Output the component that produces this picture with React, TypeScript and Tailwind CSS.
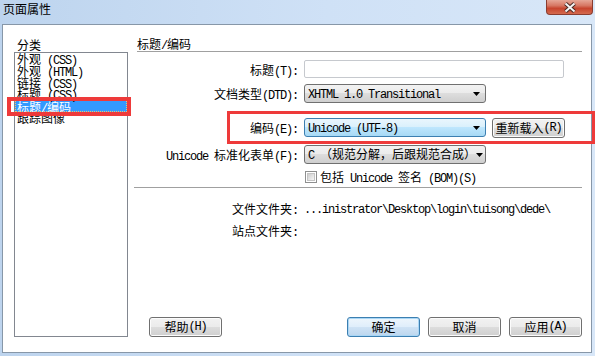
import type { ReactNode } from "react";

const CJK = /[\u2E80-\u9FFF\uFF00-\uFFEF\u3000-\u303F]/;
const CJK_RUNS = /([\u2E80-\u9FFF\uFF00-\uFFEF\u3000-\u303F]+)/;

// SimSun-like look: CJK at 12px, latin as 6px-wide mono
function Txt({ s }: { s: string }) {
  const parts = s.split(CJK_RUNS).filter(Boolean);
  return (
    <>
      {parts.map((p, i) =>
        CJK.test(p) ? (
          <span key={i} className="font-['Noto_Sans_CJK_SC',sans-serif] text-[12px]">{p}</span>
        ) : (
          <span key={i} className="font-['Liberation_Mono','Noto_Sans_CJK_SC',monospace] text-[12px] tracking-[-1.2px]">{p}</span>
        ),
      )}
    </>
  );
}

function Arrow() {
  return (
    <svg width="7" height="4" viewBox="0 0 7 4" className="shrink-0">
      <path d="M0 0 H7 L3.5 4 Z" fill="#000" />
    </svg>
  );
}

function Combo({ value, hot = false }: { value: string; hot?: boolean }) {
  return (
    <div
      className={
        hot
          ? "flex h-[19px] w-[182px] items-center justify-between rounded-[3px] border border-[#3c7fb1] bg-[linear-gradient(#eaf6fd,#d9f0fc_49%,#bee6fd_50%,#a7d9f5)] pl-[3px] pr-[5px] leading-[14px] whitespace-pre"
          : "flex h-[19px] w-[182px] items-center justify-between rounded-[3px] border border-[#707070] bg-[linear-gradient(#f2f2f2,#ebebeb_49%,#dddddd_50%,#cfcfcf)] pl-[3px] pr-[5px] leading-[14px] whitespace-pre"
      }
    >
      <span><Txt s={value} /></span>
      <Arrow />
    </div>
  );
}

function Btn({ label, main = false, w = "w-[73px]" }: { label: string; main?: boolean; w?: string }) {
  return (
    <div
      className={
        (main
          ? "border-[#3c7fb1] bg-[linear-gradient(#eef6fc,#dfeefb_49%,#cfe3f5_50%,#bcd6ee)] shadow-[inset_0_0_0_1px_#a9d6f5] "
          : "border-[#707070] bg-[linear-gradient(#f2f2f2,#ebebeb_49%,#dddddd_50%,#cfcfcf)] shadow-[inset_0_0_0_1px_#fcfcfc] ") +
        w +
        " flex h-[20px] items-center justify-center rounded-[3px] border leading-[14px] whitespace-pre"
      }
    >
      <Txt s={label} />
    </div>
  );
}

function Row({ label, children, h, className = "" }: { label: string; children: ReactNode; h: string; className?: string }) {
  return (
    <div className={`flex items-center ${h} ${className}`}>
      <div className="w-[161px] pt-[2px] text-right leading-[14px] whitespace-pre">
        <Txt s={label} />
      </div>
      <div className="ml-[6px] flex items-center">{children}</div>
    </div>
  );
}

function CloseButton() {
  return (
    <div className="mr-[2px] flex h-[15px] w-[47px] items-center justify-center rounded-b-[4px] border border-t-0 border-[#8a3c2f] bg-[linear-gradient(#e6a797,#d77763_40%,#c7452e_60%,#d46a4f)]">
      <svg width="14" height="11" viewBox="0 0 14 11">
        <path d="M2.5 1.5 L11.5 9.5 M11.5 1.5 L2.5 9.5" stroke="#4a2a25" strokeWidth="4" />
        <path d="M2.5 1.5 L11.5 9.5 M11.5 1.5 L2.5 9.5" stroke="#f4f4f4" strokeWidth="2" />
      </svg>
    </div>
  );
}

const items = ["外观 (CSS)", "外观 (HTML)", "链接 (CSS)", "标题 (CSS)", "标题/编码", "跟踪图像"];

export default function App() {
  return (
    <div className="relative h-[356px] w-[595px] overflow-hidden bg-[linear-gradient(90deg,#bdd4ee,#cfe1f6_55%,#d8e7f8)] text-black">
      <div className="flex h-[24px] items-start justify-between">
        <div className="pl-[3px] pt-[2px] font-['Noto_Sans_CJK_SC',sans-serif] text-[12px] leading-[14px]">页面属性</div>
        <CloseButton />
      </div>

      <div className="ml-[2px] flex h-[329px] w-[590px] border border-[#8797a8] bg-white">
        <div className="flex w-[125px] flex-col pl-[11px] pt-[11px]">
          <div className="h-[16px] pl-[3px] leading-[16px]">
            <Txt s="分类" />
          </div>
          <div className="h-[285px] w-[114px] border border-[#828790] bg-white">
            {items.map((it, i) =>
              i === 4 ? (
                <div key={it} className="h-[11.75px] border border-dotted border-[#f3c46a] bg-[#3399ff] pl-[1px] leading-[10px] whitespace-pre text-white">
                  <Txt s={it} />
                </div>
              ) : (
                <div key={it} className="h-[11.75px] pl-[2px] leading-[11.75px] whitespace-pre">
                  <Txt s={it} />
                </div>
              ),
            )}
          </div>
        </div>

        <div className="ml-[9px] flex w-[445px] flex-col pt-[11px] pb-[15px]">
          <div className="h-[16px] border-b border-[#a0a0a0] leading-[15px] whitespace-pre">
            <Txt s="标题/编码" />
          </div>

          <Row label="标题(T):" h="h-[18px]" className="mt-[8px]">
            <div className="h-[18px] w-[260px] rounded-[2px] border border-[#c6c9ce] bg-white" />
          </Row>
          <Row label="文档类型(DTD):" h="h-[19px]" className="mt-[6px]">
            <Combo value="XHTML 1.0 Transitional" />
          </Row>
          <Row label="编码(E):" h="h-[19px]" className="mt-[15px]">
            <Combo value="Unicode (UTF-8)" hot />
            <div className="ml-[6px]">
              <Btn label="重新载入(R)" />
            </div>
          </Row>
          <Row label="Unicode 标准化表单(F):" h="h-[19px]" className="mt-[8px]">
            <Combo value="C （规范分解，后跟规范合成）" />
          </Row>
          <div className="mt-[7px] flex h-[12px] items-center pl-[168px]">
            <div className="h-[12px] w-[12px] border border-[#8e8f8f] bg-white p-[1px]">
              <div className="h-full w-full border border-[#c4c4c4] bg-[linear-gradient(135deg,#cdcdcd,#f6f6f6)]" />
            </div>
            <div className="ml-[3px] leading-[14px] whitespace-pre">
              <Txt s="包括 Unicode 签名 (BOM)(S)" />
            </div>
          </div>
          <div className="-ml-[3px] mt-[4px] h-[1px] w-[448px] bg-[#a0a0a0]" />
          <Row label="文件文件夹:" h="h-[14px]" className="mt-[13px]">
            <span className="leading-[14px] whitespace-pre">
              <Txt s="...inistrator\Desktop\login\tuisong\dede\" />
            </span>
          </Row>
          <Row label="站点文件夹:" h="h-[14px]" className="mt-[8px]">
            <span />
          </Row>

          <div className="mt-auto flex">
            <div className="ml-[12px]">
              <Btn label="帮助(H)" />
            </div>
            <div className="ml-auto flex gap-[8px]">
              <Btn label="确定" main />
              <Btn label="取消" />
              <Btn label="应用(A)" />
            </div>
          </div>
        </div>
      </div>

      {/* red annotation boxes */}
      <div className="absolute left-[7px] top-[97px] h-[19px] w-[124px] border-[4px] border-[#ee3a3a]" />
      <div className="absolute left-[227px] top-[111px] h-[33px] w-[368px] border-[3px] border-[#ee3a3a]" />
    </div>
  );
}
